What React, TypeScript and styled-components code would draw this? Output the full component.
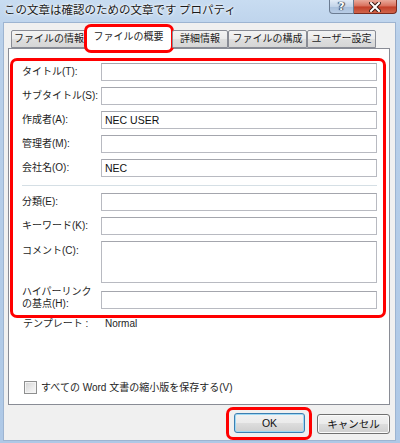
import React from "react";
import styled, { createGlobalStyle } from "styled-components";

const tabs = [
  { label: "ファイルの情報", width: 76 },
  { label: "ファイルの概要", width: 87 },
  { label: "詳細情報", width: 56 },
  { label: "ファイルの構成", width: 79 },
  { label: "ユーザー設定", width: 69 },
];

const topFields = [
  { label: "タイトル(T):", value: "" },
  { label: "サブタイトル(S):", value: "" },
  { label: "作成者(A):", value: "NEC USER" },
  { label: "管理者(M):", value: "" },
  { label: "会社名(O):", value: "NEC" },
];

const App: React.FC = () => {
  const selected = 1;

  return (
    <>
      <GlobalStyle />
      <Window>
        <TitleBar>
          <Title>この文章は確認のための文章です プロパティ</Title>
          <CaptionButtons>
            <HelpButton>?</HelpButton>
            <CloseButton>
              <svg width="12" height="10" viewBox="0 0 12 10">
                <path
                  d="M2 1 L10 9 M10 1 L2 9"
                  stroke="#3b1a14"
                  strokeWidth="4"
                  strokeLinecap="square"
                />
                <path
                  d="M2 1 L10 9 M10 1 L2 9"
                  stroke="#ffffff"
                  strokeWidth="2"
                  strokeLinecap="square"
                />
              </svg>
            </CloseButton>
          </CaptionButtons>
        </TitleBar>

        <Body>
          <TabStrip>
            {tabs.map((t, i) => (
              <Tab key={t.label} $width={t.width} $active={i === selected}>
                {t.label}
              </Tab>
            ))}
          </TabStrip>

          <TabPanel>
            <FieldsBox>
              {topFields.map((f) => (
                <React.Fragment key={f.label}>
                  <Label>{f.label}</Label>
                  <TextBox>{f.value}</TextBox>
                </React.Fragment>
              ))}
              <Separator />
              <Label>分類(E):</Label>
              <TextBox />
              <Label>キーワード(K):</Label>
              <TextBox />
              <Label $top>コメント(C):</Label>
              <TextBox $height={42} />
              <Label $twoLine>
                ハイパーリンク
                <br />
                の基点(H):
              </Label>
              <TextBox $offset={2} />
            </FieldsBox>

            <TemplateRow>
              <TemplateLabel>テンプレート :</TemplateLabel>
              <span>Normal</span>
            </TemplateRow>

            <CheckRow>
              <CheckBox />
              <span>すべての Word 文書の縮小版を保存する(V)</span>
            </CheckRow>
          </TabPanel>

          <ButtonRow>
            <Highlight>
              <PushButton $default>OK</PushButton>
            </Highlight>
            <PushButton>キャンセル</PushButton>
          </ButtonRow>
        </Body>
      </Window>
    </>
  );
};

export default App;

const GlobalStyle = createGlobalStyle`
  html, body {
    margin: 0;
    padding: 0;
    background: #ffffff;
  }
  body {
    font-family: "Liberation Sans", "Noto Sans CJK JP", sans-serif;
    color: #1e1e1e;
  }
  * {
    box-sizing: border-box;
  }
`;

const Window = styled.div`
  width: 400px;
  height: 443px;
  display: flex;
  flex-direction: column;
  background: linear-gradient(180deg, #c8dcf1 0%, #b9d0ea 8%, #aec8e6 100%);
  overflow: hidden;
`;

const TitleBar = styled.div`
  height: 22px;
  display: flex;
  align-items: flex-start;
  flex: none;
`;

const Title = styled.div`
  padding: 2px 0 0 4px;
  font-family: "Noto Sans CJK JP", sans-serif;
  font-size: 11.5px;
  line-height: 14px;
  color: #1a1a1a;
  text-shadow: 0 0 4px #ffffff, 0 0 2px #ffffff;
`;

const CaptionButtons = styled.div`
  margin-left: auto;
  margin-right: 3px;
  display: flex;
`;

const HelpButton = styled.div`
  width: 25px;
  height: 14px;
  border: 1px solid #6b7c92;
  border-top: none;
  border-radius: 0 0 0 4px;
  background: linear-gradient(180deg, #e3ecf7 0%, #c3d4e9 50%, #a9bfdb 51%, #b9cde6 100%);
  color: #ffffff;
  font-family: "DejaVu Sans", sans-serif;
  font-weight: bold;
  font-size: 11px;
  line-height: 13px;
  text-align: center;
  text-shadow: 0 0 1px #2b3a4e, 1px 0 1px #2b3a4e, -1px 0 1px #2b3a4e;
`;

const CloseButton = styled.div`
  width: 43px;
  height: 14px;
  border: 1px solid #7a2b1f;
  border-top: none;
  border-left: none;
  border-radius: 0 0 4px 0;
  background: linear-gradient(180deg, #e9a99b 0%, #d86e5a 48%, #c23e28 52%, #d0644a 100%);
  display: flex;
  align-items: center;
  justify-content: center;
`;

const Body = styled.div`
  flex: 1;
  margin: 0 4px 5px 3px;
  padding: 3px 5px 0 4px;
  border: 1px solid #9db4d1;
  background: #f0f0f0;
  display: flex;
  flex-direction: column;
  font-size: 10px;
`;

const TabStrip = styled.div`
  height: 22px;
  margin-left: 3px;
  display: flex;
  align-items: flex-end;
  position: relative;
  z-index: 1;
`;

const Tab = styled.div<{ $width: number; $active?: boolean }>`
  position: relative;
  width: ${(p) => p.$width}px;
  height: ${(p) => (p.$active ? 23 : 18)}px;
  margin: ${(p) => (p.$active ? "0 0 -1px -2px" : "0")};
  border: 1px solid #898c95;
  border-bottom: ${(p) => (p.$active ? "none" : "1px solid #898c95")};
  border-radius: 2px 2px 0 0;
  background: ${(p) =>
    p.$active
      ? "#ffffff"
      : "linear-gradient(180deg, #f3f3f3 0%, #ebebeb 50%, #dedede 51%, #d6d6d6 100%)"};
  display: flex;
  align-items: center;
  justify-content: center;
  white-space: nowrap;
  font-size: 10px;
  line-height: 12px;
  padding-bottom: ${(p) => (p.$active ? 3 : 0)}px;

  ${(p) =>
    p.$active &&
    `
    &::after {
      content: "";
      position: absolute;
      top: -3px;
      left: -2px;
      right: -3px;
      bottom: -4px;
      border: 3px solid #ff0000;
      border-radius: 7px;
      pointer-events: none;
    }
  `}
`;

const TabPanel = styled.div`
  height: 357px;
  flex: none;
  background: #ffffff;
  border: 1px solid #898c95;
  padding: 9px 3px 10px 1px;
  display: flex;
  flex-direction: column;
`;

const FieldsBox = styled.div`
  border: 3px solid #ff0000;
  border-radius: 7px;
  padding: 2px 6px 6px 9px;
  display: grid;
  grid-template-columns: 79px 1fr;
  row-gap: 6px;
  align-items: center;
`;

// the two-line label hangs over its row instead of making it taller
const Label = styled.div<{ $top?: boolean; $twoLine?: boolean }>`
  font-size: 10px;
  line-height: 12px;
  white-space: nowrap;
  align-self: ${(p) => (p.$top ? "start" : "center")};
  padding-top: ${(p) => (p.$top ? 4 : 0)}px;
  margin: ${(p) => (p.$twoLine ? "-4px 0 -2px" : "0")};
`;

const TextBox = styled.div<{ $height?: number; $offset?: number }>`
  height: ${(p) => p.$height ?? 18}px;
  margin-top: ${(p) => p.$offset ?? 0}px;
  border: 1px solid #b8bac1;
  border-top-color: #a4a6ad;
  background: #ffffff;
  padding: 0 3px;
  font-size: 10.5px;
  line-height: 16px;
  color: #111111;
`;

const Separator = styled.div`
  grid-column: 1 / -1;
  height: 1px;
  margin: 2px 0 1px;
  background: #d5dfe5;
`;

const TemplateRow = styled.div`
  display: flex;
  padding: 0 0 0 13px;
  font-size: 10px;
  line-height: 12px;
`;

const TemplateLabel = styled.span`
  width: 82px;
`;

const CheckRow = styled.div`
  margin-top: auto;
  padding-left: 14px;
  display: flex;
  align-items: center;
  gap: 4px;
  font-size: 10px;
  line-height: 13px;
`;

const CheckBox = styled.span`
  width: 13px;
  height: 13px;
  border: 1px solid #8e8f8f;
  background: linear-gradient(135deg, #d3d3d3 0%, #ececec 60%, #f8f8f8 100%);
  box-shadow: inset 0 0 0 1px #f4f4f4;
`;

const ButtonRow = styled.div`
  display: flex;
  justify-content: flex-end;
  align-items: center;
  gap: 5px;
  padding-top: 2px;
`;

const Highlight = styled.div`
  border: 3px solid #ff0000;
  border-radius: 7px;
  padding: 3px 4px 4px 5px;
`;

const PushButton = styled.div<{ $default?: boolean }>`
  width: ${(p) => (p.$default ? 71 : 73)}px;
  height: 20px;
  border: 1px solid ${(p) => (p.$default ? "#3c7fb1" : "#707070")};
  border-radius: 3px;
  background: linear-gradient(180deg, #f2f2f2 0%, #ebebeb 48%, #dddddd 52%, #cfcfcf 100%);
  box-shadow: inset 0 0 0 1px ${(p) => (p.$default ? "#9fd9f5" : "#fbfbfb")};
  display: flex;
  align-items: center;
  justify-content: center;
  font-size: 10.5px;
  color: #111111;
`;
